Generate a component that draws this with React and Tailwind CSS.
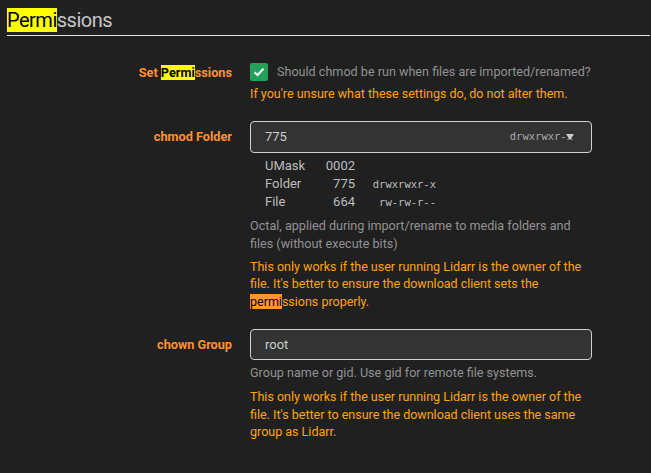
// Permissions settings section (dark theme)

const ROBOTO = { fontFamily: 'Roboto, "Noto Sans", sans-serif' };
const MONO = 'font-["DejaVu_Sans_Mono",monospace]';

function Mark({ children, current }) {
  return (
    <span className={current ? 'bg-[#ff9632] text-black' : 'bg-[#ffff00] text-black'}>{children}</span>
  );
}

function Row({ label, children, labelClass = '' }) {
  return (
    <div className="flex">
      <div className={`w-[232px] shrink-0 text-right text-[12.7px] font-bold text-[#ff902b] ${labelClass}`}>
        {label}
      </div>
      <div className="ml-[18px] w-[342px]">{children}</div>
    </div>
  );
}

function Warn({ children, className = '' }) {
  return <div className={`text-[12.5px] leading-[17.5px] text-[#ffa500] ${className}`}>{children}</div>;
}

function Help({ children, className = '' }) {
  return <div className={`text-[12.6px] leading-[18px] text-[#909293] ${className}`}>{children}</div>;
}

export default function App() {
  return (
    <div className="h-[473px] w-full overflow-hidden bg-[#202020]" style={ROBOTO}>
      {/* Legend */}
      <div className="ml-[7px] mr-[1px] border-b border-[#e5e5e5] pt-[8px] pb-[2px]">
        <div className="text-[20px] leading-[25px] tracking-[-0.5px] text-[#c7c7c7]">
          <Mark>Permi</Mark>ssions
        </div>
      </div>

      <div className="pt-[26px]">
        {/* Set Permissions */}
        <Row label={<span className="leading-[20px]">Set <Mark>Permi</Mark>ssions</span>} labelClass="pt-[1px]">
          <div className="flex items-center h-[20px]">
            <div className="flex h-[18px] w-[18px] shrink-0 items-center justify-center rounded-[2px] bg-[#23a15a]">
              <svg width="12" height="10" viewBox="0 0 12 10">
                <path d="M1.5 5.2 L4.5 8 L10.5 1.8" fill="none" stroke="#fff" strokeWidth="2" />
              </svg>
            </div>
            <div className="ml-[9px] whitespace-nowrap text-[12.6px] text-[#909293]">
              Should chmod be run when files are imported/renamed?
            </div>
          </div>
          <Warn className="mt-[3px]">If you're unsure what these settings do, do not alter them.</Warn>
        </Row>

        {/* chmod Folder */}
        <div className="mt-[18px]">
          <Row label={<div className="flex h-[32px] items-center justify-end">chmod Folder</div>}>
            <div className="relative flex h-[32px] items-center rounded-[4px] border border-[#d0d0d0] bg-[#333333] pl-[14px] pr-[18px]">
              <span className="text-[13px] text-[#cccccc]">775</span>
              <span className={`ml-auto text-[10.5px] text-[#aaaaaa] ${MONO}`}>drwxrwxr-x</span>
              <svg className="absolute right-[17px] top-[12px]" width="8" height="7" viewBox="0 0 8 7">
                <path d="M0 0 L8 0 L4 6 Z" fill="#cccccc" />
              </svg>
            </div>
            <div className="mt-[4px] pl-[15px] text-[13px] leading-[18px] text-[#bdbdbd]">
              <div className="flex">
                <span className="w-[50px]">UMask</span>
                <span className="w-[40px] text-right">0002</span>
              </div>
              <div className="flex">
                <span className="w-[50px]">Folder</span>
                <span className="w-[40px] text-right">775</span>
                <span className={`w-[81px] text-right text-[10.5px] ${MONO}`}>drwxrwxr-x</span>
              </div>
              <div className="flex">
                <span className="w-[50px]">File</span>
                <span className="w-[40px] text-right">664</span>
                <span className={`w-[81px] text-right text-[10.5px] ${MONO}`}>rw-rw-r--</span>
              </div>
            </div>
            <Help className="mt-[6px]">
              Octal, applied during import/rename to media folders and files (without execute bits)
            </Help>
            <Warn className="mt-[5px]">
              This only works if the user running Lidarr is the owner of the file. It's better to ensure the
              download client sets the <Mark current>permi</Mark>ssions properly.
            </Warn>
          </Row>
        </div>

        {/* chown Group */}
        <div className="mt-[19px]">
          <Row label={<div className="flex h-[31px] items-center justify-end">chown Group</div>}>
            <div className="flex h-[31px] items-center rounded-[4px] border border-[#d0d0d0] bg-[#333333] pl-[14px]">
              <span className="text-[13px] text-[#cccccc]">root</span>
            </div>
            <Help className="mt-[4px]">Group name or gid. Use gid for remote file systems.</Help>
            <Warn className="mt-[6px]">
              This only works if the user running Lidarr is the owner of the file. It's better to ensure the
              download client uses the same group as Lidarr.
            </Warn>
          </Row>
        </div>
      </div>
    </div>
  );
}
